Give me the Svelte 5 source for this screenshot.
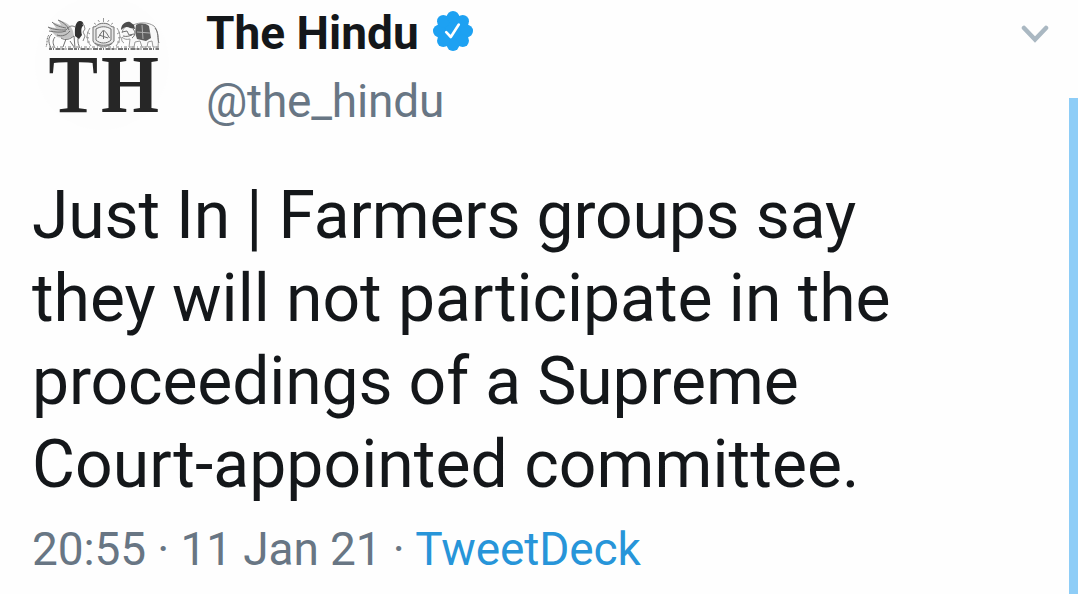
<script>
  // tracking is in px per character
  let tweet = {
    name: 'The Hindu',
    handle: '@the_hindu',
    lines: [
      { text: 'Just In ', bar: true, rest: ' Farmers groups say', tracking: -0.16 },
      { text: 'they will not participate in the', tracking: -0.02 },
      { text: 'proceedings of a Supreme', tracking: -0.13 },
      { text: 'Court-appointed committee.', tracking: 0.07 },
    ],
    time: '20:55',
    date: '11 Jan 21',
    source: 'TweetDeck',
  };

  // petals of the verified badge
  const petals = Array.from({ length: 8 }, (_, i) => {
    const a = (i * Math.PI) / 4;
    return { x: 20 + 13.8 * Math.cos(a), y: 20 + 13.8 * Math.sin(a) };
  });
</script>

<div class="page">
  <article class="tweet">
    <header class="head">
      <svg class="avatar" viewBox="0 0 138 132" role="img" aria-label="The Hindu logo">
        <circle cx="69" cy="63" r="67" fill="#fdfdfd" />
        <g class="crest">
          <!-- winged cow -->
          <path d="M15 27l8 1-4-6 9 3-3-5c8 2 13 5 15 11l1 5-7 3-10-2-5-5z" fill="#c4c4c4" stroke="none" />
          <path d="M15 27c6 3 12 3 18 3M19 22c4 4 9 5 14 6M25 20c5 2 9 5 11 10M16 31c6 1 12 2 17 0M33 30c3-4 6-5 9-3M24 35c5 2 10 0 13-4" />
          <path d="M19 34c-4 3-4 8-1 14m4-11c-3 4-2 7 0 11m6-10c5 3 9 1 13-2l1 12m4-13c-2 5-1 9 1 13M33 39l-3 8M37 41l4 6" />
          <path d="M16 35c-3 3-1 7-3 12" stroke-dasharray="2 1" />
          <path d="M42 36c0-4-1-13 4-15 4 0 5 2 4 5-2 1-2 6-1 9l-3 4z" fill="#333" stroke="none" />
          <path d="M49 24l2 1 1 4-2 3 2 4-2 5" stroke="#888" />
          <!-- shield with rays and laurels -->
          <path d="M60 27c3 0 4-2 6-3 3-1 6-1 9 0 2 1 3 3 6 3v14c-3 5-8 5-10.500 6-3-1-8-1-10.500-6z" fill="#e6e6e6" />
          <path d="M63 29c5-3 10-3 15 0v11c-4 4-11 4-15 0z" fill="#f4f4f4" />
          <path d="M70.500 18v4M65 20l1.500 2M76 20l-1.500 2M61 23l2 1.500M80 23l-2 1.500" stroke="#999" />
          <path d="M57 28c-4 6-4 12 1 18M84 28c4 6 4 12-1 18M54 32l3 2M53 37l3 1M54 42l3 0M87 32l-3 2M88 37l-3 1M87 42l-3 0" stroke="#999" />
          <path d="M65 38l3-5 2.500-3 3 3 3 5M66 35l9 3M70.500 31v8" />
          <path d="M62 43c4 3 13 3 17 0" />
          <!-- elephant -->
          <path d="M89 33c1-6 5-8 11-8 7-3 15-3 21 1 4 4 5 12 4 21h-5l-1-6-4 1-1 5h-5l-2-6-5 1-1 5h-5l1-8c-4 1-6 0-8-2-1 3 0 5 2 6" fill="#f8f8f8" stroke="#999" />
          <path d="M88 30c0-5 4-9 9-8l4 3 1 4-5-1c-3-2-6-1-9 2z" fill="#4c4c4c" stroke="none" />
          <path d="M103 25c4-2 9-2 13 1l2 12-5 3-9-2c-2-5-2-9-1-14z" fill="#5c5c5c" stroke="none" />
          <path d="M109 25l1 14M104 32l13 1" stroke="#b0b0b0" />
          <path d="M89 32l5-1 2 4 5-1M90 36c4 1 6 0 9-1M100 29c3 3 2 7-1 9M122 28c4 5 2 10 4 15" />
          <!-- ground -->
          <path d="M16 49h110" stroke="#777" stroke-width="2.2" stroke-dasharray="3 1 1 1.500 5 1" />
          <path d="M16 47h110" stroke="#aaa" stroke-width="1.500" stroke-dasharray="1 2 3 2" />
        </g>
        <text class="mono" x="15.500" y="112" textLength="49.500" lengthAdjust="spacingAndGlyphs">T</text>
        <text class="mono" x="68" y="112" textLength="58" lengthAdjust="spacingAndGlyphs">H</text>
      </svg>

      <div class="who">
        <div class="name-row">
          <span class="name">{tweet.name}</span>
          <svg class="badge" viewBox="0 0 40 40" aria-label="Verified account">
            <circle cx="20" cy="20" r="16.5" />
            {#each petals as p}
              <circle cx={p.x} cy={p.y} r="6.2" />
            {/each}
            <path d="M13.2 21.2l4.6 4.800 8-12.500" />
          </svg>
        </div>
        <div class="handle">{tweet.handle}</div>
      </div>

      <svg class="caret" viewBox="0 0 28 18" aria-label="More">
        <path d="M3 3l11 11.5L25 3" />
      </svg>
    </header>

    <p class="body">
      {#each tweet.lines as line}
        <span class="line" style="letter-spacing: {line.tracking}px">{line.text}{#if line.bar}<span class="bar">|</span>{line.rest}{/if}</span>
      {/each}
    </p>

    <footer class="meta">
      {tweet.time} · {tweet.date} · <span class="source">{tweet.source}</span>
    </footer>
  </article>
  <div class="scrollbar"></div>
</div>

<style>
  :global(body) {
    background: #fefefe;
    overflow: hidden;
  }
  .page {
    display: flex;
    width: 1078px;
    height: 594px;
    overflow: hidden;
    font-family: Roboto, sans-serif;
    color: #14171a;
  }
  .tweet {
    flex: 1;
    padding-left: 32px;
  }
  .head {
    display: flex;
    align-items: flex-start;
    height: 174px;
  }
  .avatar {
    flex: none;
    width: 138px;
    height: 132px;
    margin-left: 1px;
  }
  .crest {
    fill: none;
    stroke: #707070;
    stroke-width: 1;
  }
  .mono {
    font-family: 'Liberation Serif', serif;
    font-size: 82px;
    font-weight: 700;
    fill: #262626;
  }
  .who {
    flex: 1;
    padding: 6px 0 0 35px;
  }
  .name-row {
    display: flex;
    align-items: flex-start;
    gap: 14px;
    height: 54px;
  }
  .name {
    font-size: 46px;
    line-height: 54px;
    font-weight: 700;
  }
  .badge {
    width: 40px;
    height: 40px;
    margin-top: 5px;
    fill: #1da1f2;
  }
  .badge path {
    fill: none;
    stroke: #fff;
    stroke-width: 2.6;
    stroke-linecap: round;
    stroke-linejoin: round;
  }
  .handle {
    margin-top: 14px;
    font-size: 46px;
    line-height: 54px;
    letter-spacing: -0.2px;
    color: #687684;
  }
  .caret {
    width: 28px;
    height: 18px;
    margin: 25px 20px 0 0;
    fill: none;
    stroke: #aab8c2;
    stroke-width: 4.5;
    stroke-linecap: round;
  }
  .body {
    margin: 0;
    font-size: 66px;
    line-height: 83px;
  }
  .line {
    display: block;
    white-space: pre;
  }
  .bar {
    display: inline-block;
    transform: scaleY(1.13) translateY(1px);
  }
  .meta {
    margin-top: 16px;
    font-size: 46px;
    line-height: 54px;
    letter-spacing: -0.11px;
    color: #687684;
  }
  .source {
    color: #2795d9;
  }
  .scrollbar {
    width: 9px;
    margin-top: 98px;
    background: #8ecdf7;
  }
</style>
